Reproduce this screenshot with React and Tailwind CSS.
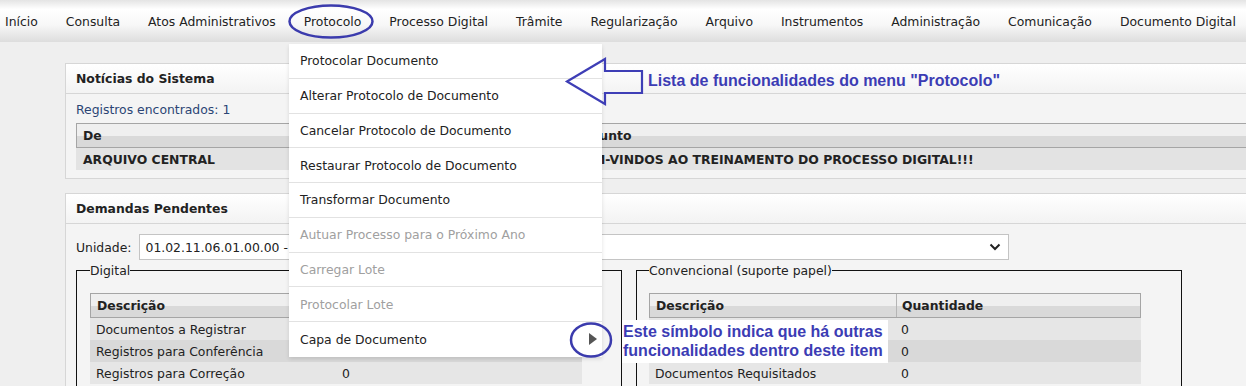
import React from 'react';

const navItems = [
  'Início',
  'Consulta',
  'Atos Administrativos',
  'Protocolo',
  'Processo Digital',
  'Trâmite',
  'Regularização',
  'Arquivo',
  'Instrumentos',
  'Administração',
  'Comunicação',
  'Documento Digital',
];

const menuItems = [
  { label: 'Protocolar Documento' },
  { label: 'Alterar Protocolo de Documento' },
  { label: 'Cancelar Protocolo de Documento' },
  { label: 'Restaurar Protocolo de Documento' },
  { label: 'Transformar Documento' },
  { label: 'Autuar Processo para o Próximo Ano', disabled: true },
  { label: 'Carregar Lote', disabled: true },
  { label: 'Protocolar Lote', disabled: true },
  { label: 'Capa de Documento', sub: true },
];

const digitalRows = [
  ['Documentos a Registrar', '0'],
  ['Registros para Conferência', '0'],
  ['Registros para Correção', '0'],
];

const convRows = [
  ['', '0'],
  ['', '0'],
  ['Documentos Requisitados', '0'],
];

function Panel({ title, children }) {
  return (
    <div className="ml-[65px] w-[1200px] border border-[#d6d6d6] bg-[#f4f4f4]">
      <div className="h-[30px] flex items-center px-[10px] font-bold border-b border-[#d6d6d6] bg-[linear-gradient(#ffffff,#f3f3f3)]">
        {title}
      </div>
      <div className="px-[10px]">{children}</div>
    </div>
  );
}

function DataTable({ rows }) {
  return (
    <div className="w-[492px]">
      <div className="grid grid-cols-[246px_1fr] h-[25px] items-center font-bold border border-[#a5a5a5] bg-[linear-gradient(#efefef_50%,#d9d9d9_50%)]">
        <span className="pl-[6px]">Descrição</span>
        <span className="pl-[5px] h-full flex items-center border-l border-[#b5b5b5]">Quantidade</span>
      </div>
      {rows.map((r, i) => (
        <div
          key={i}
          className={`grid grid-cols-[246px_1fr] h-[22px] items-center ${
            i % 2 === 1 ? 'bg-[#d9d9d9]' : 'bg-[#e6e6e6]'
          }`}
        >
          <span className="pl-[6px]">{r[0]}</span>
          <span className="pl-[6px]">{r[1]}</span>
        </div>
      ))}
    </div>
  );
}

export default function App() {
  return (
    <div className="relative w-[1246px] h-[386px] overflow-hidden bg-[#efefef] text-[#222] font-['DejaVu_Sans',sans-serif] text-[12.4px] leading-[15px]">
      {/* top menu bar */}
      <nav className="h-[42px] flex items-center pl-[5px] gap-[28px] bg-[linear-gradient(#e4e4e4,#ffffff_22%,#f7f7f7_60%,#dddddd)]">
        {navItems.map(n => (
          <span key={n} className="whitespace-nowrap">
            {n}
          </span>
        ))}
      </nav>

      <div className="pt-[21px] flex flex-col gap-[14px]">
        <Panel title="Notícias do Sistema">
          <div className="pt-[2px] h-[28px] flex items-center text-[#2b4574]">Registros encontrados: 1</div>
          <div className="mt-[1px] mb-[8px]">
            <div className="grid grid-cols-[492px_1fr] h-[25px] items-center font-bold border border-[#a5a5a5] bg-[linear-gradient(#efefef_50%,#d9d9d9_50%)]">
              <span className="pl-[6px]">De</span>
              <span className="pl-[6px]">Assunto</span>
            </div>
            <div className="grid grid-cols-[492px_1fr] h-[22px] items-center font-bold bg-[#e3e3e3]">
              <span className="pl-[7px]">ARQUIVO CENTRAL</span>
              <span className="pl-[7px]">BEM-VINDOS AO TREINAMENTO DO PROCESSO DIGITAL!!!</span>
            </div>
          </div>
        </Panel>

        <Panel title="Demandas Pendentes">
          <div className="pt-[10px] flex items-center gap-[7px]">
            <span>Unidade:</span>
            <div className="w-[870px] h-[26px] flex items-center justify-between px-[6px] bg-white border border-[#c4c4c4]">
              <span>01.02.11.06.01.00.00 - ARQUIVO CENTRAL</span>
              <svg width="12" height="8" viewBox="0 0 12 8" className="mr-[1px]">
                <path d="M1.5 1.5 L6 6 L10.5 1.5" fill="none" stroke="#222" strokeWidth="2" />
              </svg>
            </div>
          </div>
          <div className="pt-[3px] flex gap-[14px]">
            <fieldset className="w-[546px] h-[140px] border border-[#111] px-[13px]">
              <legend className="px-0">Digital</legend>
              <div className="pt-[15px]">
                <DataTable rows={digitalRows} />
              </div>
            </fieldset>
            <fieldset className="w-[546px] h-[140px] border border-[#111] px-[12px]">
              <legend className="px-0">Convencional (suporte papel)</legend>
              <div className="pt-[15px]">
                <DataTable rows={convRows} />
              </div>
            </fieldset>
          </div>
        </Panel>
      </div>

      {/* dropdown of Protocolo */}
      <div className="absolute left-[289px] top-[44px] w-[313px] bg-white shadow-[0_2px_4px_rgba(0,0,0,0.12)]">
        {menuItems.map((m, i) => (
          <div
            key={m.label}
            className={`h-[34.75px] flex items-center justify-between pl-[11px] pr-[5px] ${
              i < menuItems.length - 1 ? 'border-b border-[#e2e2e2]' : ''
            } ${m.disabled ? 'text-[#a0a0a0]' : 'text-[#222]'}`}
          >
            <span>{m.label}</span>
            {m.sub && (
              <svg width="8" height="12" viewBox="0 0 8 12">
                <path d="M0 0 L8 6 L0 12 Z" fill="#555" />
              </svg>
            )}
          </div>
        ))}
      </div>

      {/* annotations */}
      <svg className="absolute left-0 top-0 pointer-events-none" width="1246" height="386">
        <ellipse cx="331" cy="21.5" rx="41.5" ry="16" fill="none" stroke="#3b3bad" strokeWidth="2.5" />
        <polygon
          points="567,81.5 605,59 605,71 642,71 642,93 605,93 605,104"
          fill="none"
          stroke="#3e3eb6"
          strokeWidth="2.2"
          strokeLinejoin="miter"
        />
        <ellipse cx="591" cy="340" rx="20" ry="16.5" fill="none" stroke="#3b3bad" strokeWidth="2.5" />
      </svg>

      <div className="absolute left-[648px] top-[71px] font-['Liberation_Sans',Arial,sans-serif] font-bold text-[16px] leading-[20px] text-[#3c3cb4] whitespace-nowrap">
        Lista de funcionalidades do menu "Protocolo"
      </div>

      <div className="absolute left-[622px] top-[320px] w-[266px] h-[43px] bg-white pl-[1px] pt-[2px] font-['Liberation_Sans',Arial,sans-serif] font-bold text-[16px] leading-[19px] text-[#3c3cb4] whitespace-nowrap">
        <div>Este símbolo indica que há outras</div>
        <div>funcionalidades dentro deste item</div>
      </div>
    </div>
  );
}
